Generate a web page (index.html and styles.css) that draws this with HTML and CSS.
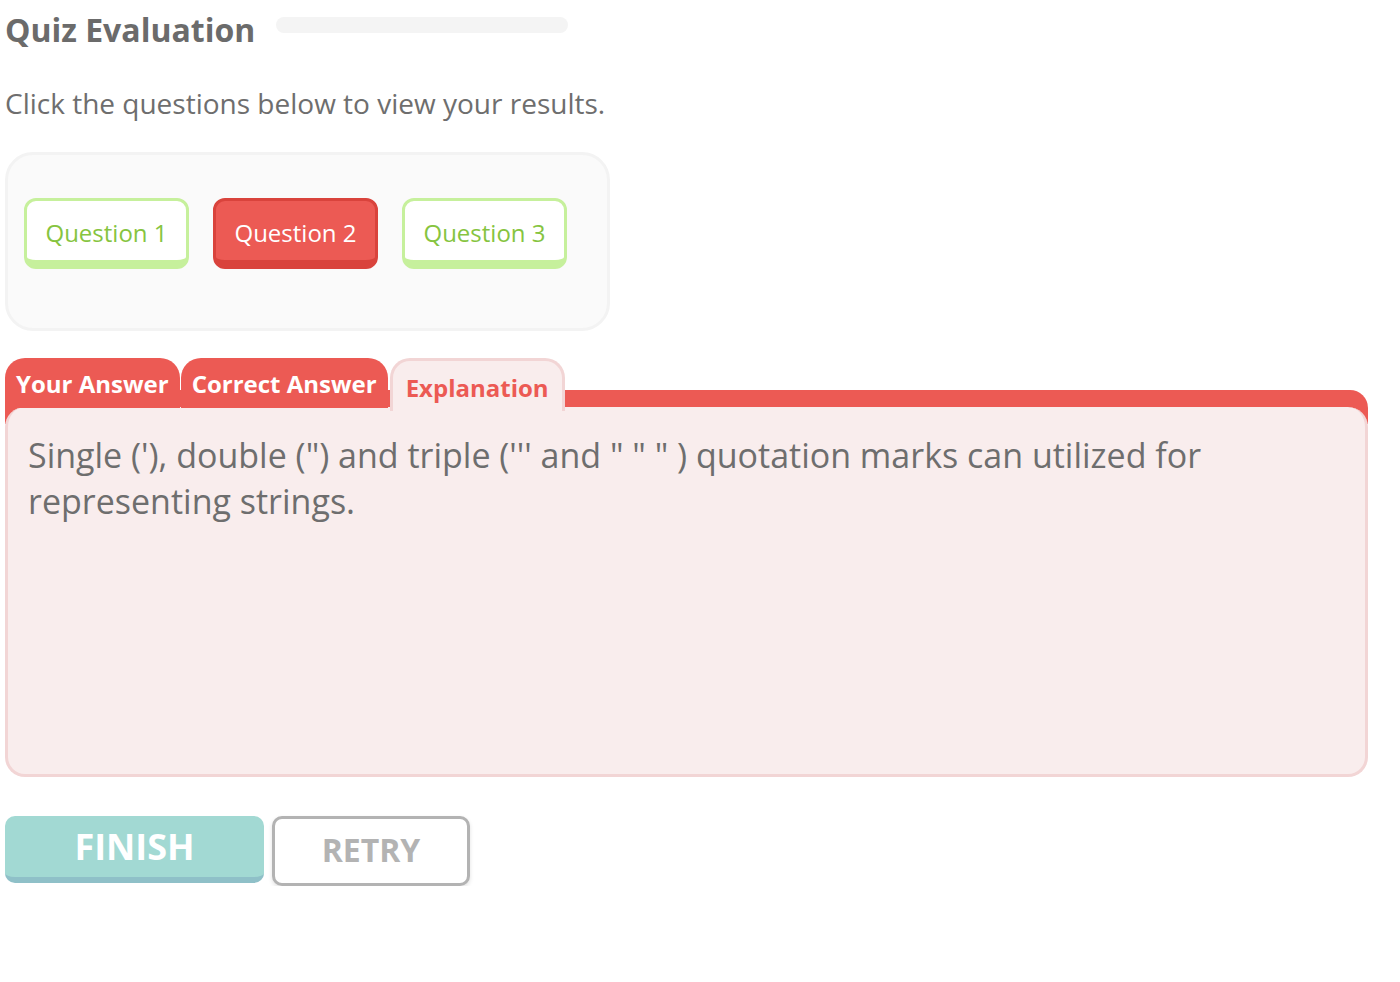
FILE: index.html
```
<!DOCTYPE html>
<html lang="en">
<head>
<meta charset="utf-8">
<title>Quiz Evaluation</title>
<link rel="stylesheet" href="styles.css">
</head>
<body>
<div class="page">
  <div class="header">
    <h1 class="title">Quiz Evaluation</h1>
    <div class="progress"></div>
  </div>
  <p class="subtitle">Click the questions below to view your results.</p>

  <div class="qpanel">
    <button class="qbtn">Question 1</button>
    <button class="qbtn wrong">Question 2</button>
    <button class="qbtn">Question 3</button>
  </div>

  <div class="tabs">
    <div class="tab">Your Answer</div>
    <div class="tab">Correct Answer</div>
    <div class="tab active">Explanation</div>
  </div>
  <div class="tabwrap">
    <div class="tabpanel">Single ('), double (") and triple (''' and " " " ) quotation marks can utilized for representing strings.</div>
  </div>

  <div class="actions">
    <button class="finish">FINISH</button>
    <button class="retry">RETRY</button>
  </div>
</div>
</body>
</html>
```

FILE: styles.css
```
* { box-sizing: border-box; }
html, body { margin: 0; padding: 0; background: #ffffff; }
body { font-family: "Open Sans", "Liberation Sans", sans-serif; color: #6b6b6b; }

.page { padding: 0 5px; width: 1373px; }

.header { display: flex; align-items: flex-start; gap: 21px; margin-top: 10px; }
.title { margin: 0; font-size: 32px; line-height: 40px; font-weight: 700; color: #6b6b6b; }
.progress { width: 292px; height: 16px; margin-top: 7px; border-radius: 8px; background: #f4f4f4; }

.subtitle { margin: 35px 0 0; font-size: 28px; line-height: 36px; color: #6e6e6e; }

.qpanel {
  margin-top: 31px;
  width: 605px; height: 179px;
  padding: 43px 0 0 16px;
  border: 3px solid #f3f3f3; border-radius: 28px;
  background: #fafafa;
  display: flex; align-items: flex-start; gap: 24px;
}
.qbtn {
  width: 165px; height: 71px;
  padding: 3px 0 0;
  border: 3px solid #c6f09c; border-bottom-width: 9px;
  border-radius: 12px;
  background: #ffffff;
  font-family: inherit; font-size: 24px; color: #86c440;
  display: flex; align-items: center; justify-content: center;
  cursor: pointer;
}
.qbtn.wrong { background: #ec5a54; border-color: #d9433c; color: #ffffff; }

.tabs { margin-top: 27px; height: 32px; display: flex; align-items: flex-start; gap: 1px; position: relative; z-index: 1; }
.tab {
  height: 50px;
  padding: 11px 11px 0;
  border-radius: 20px 20px 0 0;
  background: #ec5a54;
  color: #ffffff; font-size: 24px; font-weight: 700; line-height: 30px;
  white-space: nowrap;
}
.tab.active {
  height: 53px;
  margin-left: 1px;
  padding: 12px 13px 0;
  background: #f9eded;
  border: 3px solid #f2d5d5; border-bottom: 0;
  color: #ec5a54;
}

.tabwrap {
  padding-top: 17px;
  border-top-right-radius: 18px;
  background: linear-gradient(to bottom, #ec5a54 0, #ec5a54 34px, transparent 34px);
}
.tabpanel {
  height: 370px;
  padding: 25px 20px 0;
  border: 3px solid #f2d5d5; border-top: 0;
  border-radius: 20px;
  background: #f9eded;
  font-size: 34px; line-height: 46px; color: #6e6e6e;
}

.actions { margin-top: 39px; display: flex; align-items: flex-start; gap: 8px; }
.finish {
  width: 259px; height: 67px;
  border: 0; border-bottom: 6px solid #8fc0c8; border-radius: 10px;
  background: #a2d9d3;
  font-family: inherit; font-size: 36px; font-weight: 700; color: #ffffff;
  display: flex; align-items: center; justify-content: center;
  padding: 0;
}
.retry {
  width: 198px; height: 70px;
  border: 3px solid #b3b3b3; border-radius: 10px;
  background: #ffffff;
  box-shadow: 0 2px 4px rgba(0,0,0,0.12);
  font-family: inherit; font-size: 32px; font-weight: 700; color: #b3b3b3;
  display: flex; align-items: center; justify-content: center;
  padding: 0 0 3px;
}
```
